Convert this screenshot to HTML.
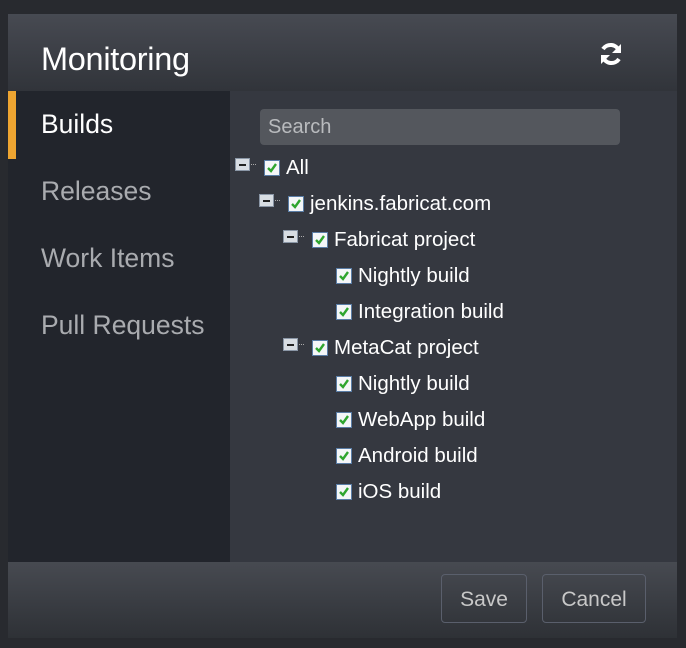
<!DOCTYPE html>
<html><head><style>
body{margin:0;width:686px;height:648px;background:#282a2f;font-family:"Liberation Sans",sans-serif;position:relative;overflow:hidden}
.dlg{position:absolute;left:8px;top:14px;width:669px;height:624px;background:#353840}
.hdr{position:absolute;left:0;top:0;width:669px;height:77px;background:linear-gradient(#474a52,#31343a)}
.hdr h1{position:absolute;left:33px;top:27px;margin:0;font-weight:normal;font-size:32.5px;color:#fff;letter-spacing:-0.3px}
.side{position:absolute;left:0;top:77px;width:222px;height:471px;background:#22252c}
.side .it{position:absolute;left:33px;font-size:26.5px;color:#a9abaf}
.bar{position:absolute;left:0;top:0;width:8px;height:68px;background:#eea531}
.ftr{position:absolute;left:0;top:548px;width:669px;height:76px;background:linear-gradient(#474a51,#2e3136)}
.btn{position:absolute;top:12px;height:49px;border:1px solid #5a5f6c;border-radius:4px;color:#c8c8c8;font-size:21px;line-height:49px;text-align:center;box-sizing:border-box}
.search{position:absolute;left:252px;top:95px;width:360px;height:36px;background:#54575d;border-radius:4px;color:#b9bbbe;font-size:20px;line-height:36px;padding-left:8px;box-sizing:border-box}
.row{position:absolute;color:#fff;font-size:20.5px;height:20px;line-height:20px}
.cb{position:absolute;width:14px;height:14px;background:#f4f6f8;border:1px solid #5a7da6;top:2px}
.cb svg{position:absolute;left:1px;top:1px}
.ex{position:absolute;width:13px;height:11px;background:#d8dde3;border:1px solid #8a96a6;top:3px}
.ex:after{content:"";position:absolute;left:3px;top:5px;width:7px;height:2px;background:#222}
.dots{position:absolute;top:9px;width:5px;border-top:1px dotted #aaa}
</style></head><body>
<div class="dlg">
<div class="hdr"><h1>Monitoring</h1>
<svg style="position:absolute;left:591px;top:28px" width="24" height="24" viewBox="0 0 24 24"><path d="M20 9 A9 9 0 0 0 4 7" stroke="#fff" stroke-width="4" fill="none"/><path d="M22 2 L22 11 L13 11Z" fill="#fff"/><path d="M4 15 A9 9 0 0 0 20 17" stroke="#fff" stroke-width="4" fill="none"/><path d="M2 22 L2 13 L11 13Z" fill="#fff"/></svg>
</div>
<div class="side"><div class="bar"></div>
<div class="it" style="top:18px;color:#fff">Builds</div>
<div class="it" style="top:85px">Releases</div>
<div class="it" style="top:152px">Work Items</div>
<div class="it" style="top:219px">Pull Requests</div>
</div>
<div class="search">Search</div>
<div class="ftr">
<div class="btn" style="left:433px;width:86px">Save</div>
<div class="btn" style="left:534px;width:104px">Cancel</div>
</div>
</div>
<div id="tree"></div>
<script>
var items=[[0,"All",1],[1,"jenkins.fabricat.com",1],[2,"Fabricat project",1],[3,"Nightly build"],[3,"Integration build"],[2,"MetaCat project",1],[3,"Nightly build"],[3,"WebApp build"],[3,"Android build"],[3,"iOS build"]];
var h="";items.forEach(function(it,i){var y=158+i*36,l=it[0],cx=264+l*24;
if(it[2]){var ex=cx-29;h+='<div class="row" style="left:'+ex+'px;top:'+(y-3)+'px"><div class="ex" style="left:0"></div><div class="dots" style="left:16px"></div></div>';}
h+='<div class="row" style="left:'+cx+'px;top:'+y+'px"><div class="cb" style="left:0"><svg width="12" height="12" viewBox="0 0 12 12"><path d="M2 6 L5 9 L10 2" stroke="#2fa52f" stroke-width="2.4" fill="none"/></svg></div><span style="position:absolute;left:22px;white-space:nowrap">'+it[1]+'</span></div>';});
document.getElementById("tree").innerHTML=h;
</script>
</body></html>
